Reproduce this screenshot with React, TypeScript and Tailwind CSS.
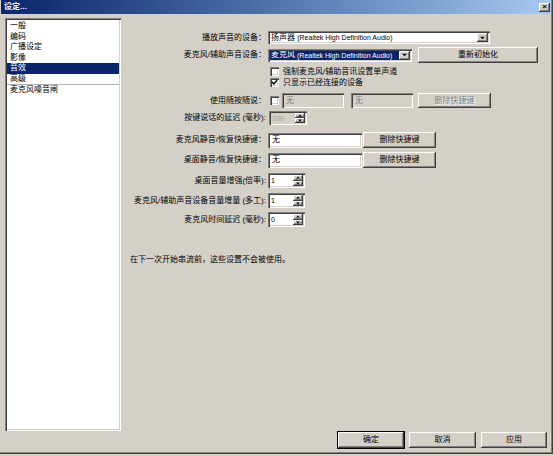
import type { ReactNode } from "react";

const raised =
  "shadow-[inset_-1px_-1px_0_#404040,inset_1px_1px_0_#ffffff,inset_-2px_-2px_0_#808080,inset_2px_2px_0_#d4d0c8]";
const sunken =
  "shadow-[inset_1px_1px_0_#808080,inset_2px_2px_0_#404040,inset_-1px_-1px_0_#ffffff,inset_-2px_-2px_0_#d4d0c8]";

const sections = ["一般", "编码", "广播设定", "影像", "音效", "高级"];

function Button({
  label,
  className = "",
  disabled = false,
  isDefault = false,
}: {
  label: string;
  className?: string;
  disabled?: boolean;
  isDefault?: boolean;
}) {
  return (
    <div
      className={`flex items-center justify-center bg-[#d4d0c8] ${raised} ${
        isDefault ? "outline outline-1 outline-black" : ""
      } ${className}`}
    >
      <span
        className={
          disabled ? "text-[#808080] [text-shadow:1px_1px_0_#ffffff]" : "text-black"
        }
      >
        {label}
      </span>
    </div>
  );
}

function Arrow({ up = false, size = 5 }: { up?: boolean; size?: number }) {
  return (
    <svg width={size} height={Math.ceil(size / 2) + 1} viewBox="0 0 6 4" className={up ? "rotate-180" : ""}>
      <path d="M0 0.5 H6 L3 3.5 Z" fill="#000" />
    </svg>
  );
}

function Combo({ className, children }: { className: string; children: ReactNode }) {
  return (
    <div className={`flex h-[13px] items-stretch bg-white p-[2px] ${sunken} ${className}`}>
      <div className="flex min-w-0 flex-1 items-center overflow-hidden">{children}</div>
      <div className={`flex w-[11px] items-center justify-center bg-[#d4d0c8] ${raised}`}>
        <Arrow />
      </div>
    </div>
  );
}

function Spin({
  value,
  className,
  disabled = false,
}: {
  value: string;
  className: string;
  disabled?: boolean;
}) {
  return (
    <div
      className={`flex items-stretch p-[2px] ${sunken} ${
        disabled ? "bg-[#d4d0c8]" : "bg-white"
      } ${className}`}
    >
      <div
        className={`flex flex-1 items-center pl-[1px] text-[7px] ${
          disabled ? "text-[#a0a0a0]" : "text-black"
        }`}
      >
        {value}
      </div>
      <div className="flex w-[10px] flex-col">
        <div className={`flex flex-1 items-center justify-center bg-[#d4d0c8] ${raised}`}>
          <Arrow up size={4} />
        </div>
        <div className={`flex flex-1 items-center justify-center bg-[#d4d0c8] ${raised}`}>
          <Arrow size={4} />
        </div>
      </div>
    </div>
  );
}

function TextField({
  value,
  className,
  disabled = false,
}: {
  value: string;
  className: string;
  disabled?: boolean;
}) {
  return (
    <div
      className={`flex items-center px-[4px] ${sunken} ${
        disabled ? "bg-[#d4d0c8] text-[#808080]" : "bg-white text-black"
      } ${className}`}
    >
      {value}
    </div>
  );
}

function Check({ checked = false }: { checked?: boolean }) {
  return (
    <div className={`flex size-[9px] shrink-0 items-center justify-center bg-white ${sunken}`}>
      {checked ? (
        <svg width="7" height="7" viewBox="0 0 7 7">
          <path d="M1 3 L2.8 5 L6 1.2" stroke="#000" strokeWidth="1.4" fill="none" />
        </svg>
      ) : null}
    </div>
  );
}

function Row({
  label,
  className,
  children,
}: {
  label?: string;
  className: string;
  children: ReactNode;
}) {
  return (
    <div className={`flex items-center ${className}`}>
      <div className="w-[145px] shrink-0 whitespace-nowrap text-right">{label}</div>
      <div className="ml-[2px] flex items-center">{children}</div>
    </div>
  );
}

export default function App() {
  return (
    <div className="h-[456px] w-[554px] bg-[#d4d0c8] font-[family-name:'Liberation_Sans','Noto_Sans_CJK_SC',sans-serif] text-[8px] leading-none text-black">
      <div className="flex h-[454px] w-[553px] flex-col shadow-[inset_-1px_-1px_0_#404040,inset_-2px_-2px_0_#808080]">
        {/* title bar */}
        <div className="ml-[1px] mr-[2px] flex h-[14px] shrink-0 items-center justify-between bg-gradient-to-r from-[#0a246a] to-[#a6caf0] pl-[3px]">
          <span className="font-bold text-white">设定...</span>
          <div
            className={`mr-[1px] flex h-[9px] w-[11px] items-center justify-center bg-[#d4d0c8] text-[8px] font-bold ${raised}`}
          >
            ×
          </div>
        </div>

        <div className="flex flex-1">
          {/* section list */}
          <div className={`ml-[5px] mt-[4px] h-[413px] w-[116px] shrink-0 bg-white p-[2px] ${sunken}`}>
            <div className="pt-[1px]">
              {sections.map((name) => (
                <div
                  key={name}
                  className={`flex h-[10.5px] items-center pl-[3px] ${
                    name === "音效" ? "bg-[#0a246a] text-white" : ""
                  }`}
                >
                  {name}
                </div>
              ))}
              <div className="h-px bg-[#b0b0b0]" />
              <div className="flex h-[10.5px] items-center pl-[3px]">麦克风噪音闸</div>
            </div>
          </div>

          {/* settings form */}
          <div className="flex flex-1 flex-col pb-[6px] pr-[6px]">
            <Row label="播放声音的设备：" className="mt-[17px] h-[13px]">
              <Combo className="w-[222px]">
                <span className="pl-[1px]">
                  扬声器 <span className="text-[7px]">(Realtek High Definition Audio)</span>
                </span>
              </Combo>
            </Row>

            <Row label="麦克风/辅助声音设备：" className="mt-[3px] h-[16px]">
              <Combo className="w-[144px]">
                <span className="flex h-full flex-1 items-center bg-[#0a246a] pl-[1px] text-white">
                  麦克风 <span className="ml-[2px] text-[7px]">(Realtek High Definition Audio)</span>
                </span>
              </Combo>
              <Button label="重新初始化" className="ml-[6px] h-[16px] w-[120px]" />
            </Row>

            <Row className="mt-[4px] h-[9px]">
              <div className="ml-[2px] flex items-center gap-[4px]">
                <Check />
                <span>强制麦克风/辅助音讯设置单声道</span>
              </div>
            </Row>

            <Row className="mt-[2px] h-[9px]">
              <div className="ml-[2px] flex items-center gap-[4px]">
                <Check checked />
                <span>只显示已经连接的设备</span>
              </div>
            </Row>

            <Row label="使用随按随说：" className="mt-[6px] h-[15px]">
              <div className="ml-[2px] flex items-center">
                <Check />
                <TextField value="无" disabled className="ml-[3px] h-[15px] w-[62px]" />
                <TextField value="无" disabled className="ml-[7px] h-[15px] w-[62px]" />
                <Button label="删除快捷键" disabled className="ml-[5px] h-[15px] w-[73px]" />
              </div>
            </Row>

            <Row label="按键说话的延迟 (毫秒):" className="mt-[3px] h-[14px]">
              <Spin value="200" disabled className="ml-[1px] h-[14px] w-[38px]" />
            </Row>

            <Row label="麦克风静音/恢复快捷键：" className="mt-[7px] h-[16px]">
              <TextField value="无" className="h-[15px] w-[94px]" />
              <Button label="删除快捷键" className="ml-[1px] h-[16px] w-[73px]" />
            </Row>

            <Row label="桌面静音/恢复快捷键：" className="mt-[4px] h-[16px]">
              <TextField value="无" className="h-[15px] w-[94px]" />
              <Button label="删除快捷键" className="ml-[1px] h-[16px] w-[73px]" />
            </Row>

            <Row label="桌面音量增强(倍率):" className="mt-[5px] h-[15px]">
              <Spin value="1" className="h-[15px] w-[37px]" />
            </Row>

            <Row label="麦克风/辅助声音设备音量增量 (多工):" className="mt-[5px] h-[15px]">
              <Spin value="1" className="h-[15px] w-[37px]" />
            </Row>

            <Row label="麦克风时间延迟 (毫秒):" className="mt-[4px] h-[15px]">
              <Spin value="0" className="h-[15px] w-[37px]" />
            </Row>

            <p className="mt-[27px] pl-[9px] leading-[12px]">
              在下一次开始串流前，这些设置不会被使用。
            </p>

            <div className="mt-auto flex h-[16px] justify-end gap-[5px]">
              <Button label="确定" isDefault className="h-[16px] w-[66px]" />
              <Button label="取消" className="h-[16px] w-[67px]" />
              <Button label="应用" className="h-[16px] w-[66px]" />
            </div>
          </div>
        </div>
      </div>
    </div>
  );
}
